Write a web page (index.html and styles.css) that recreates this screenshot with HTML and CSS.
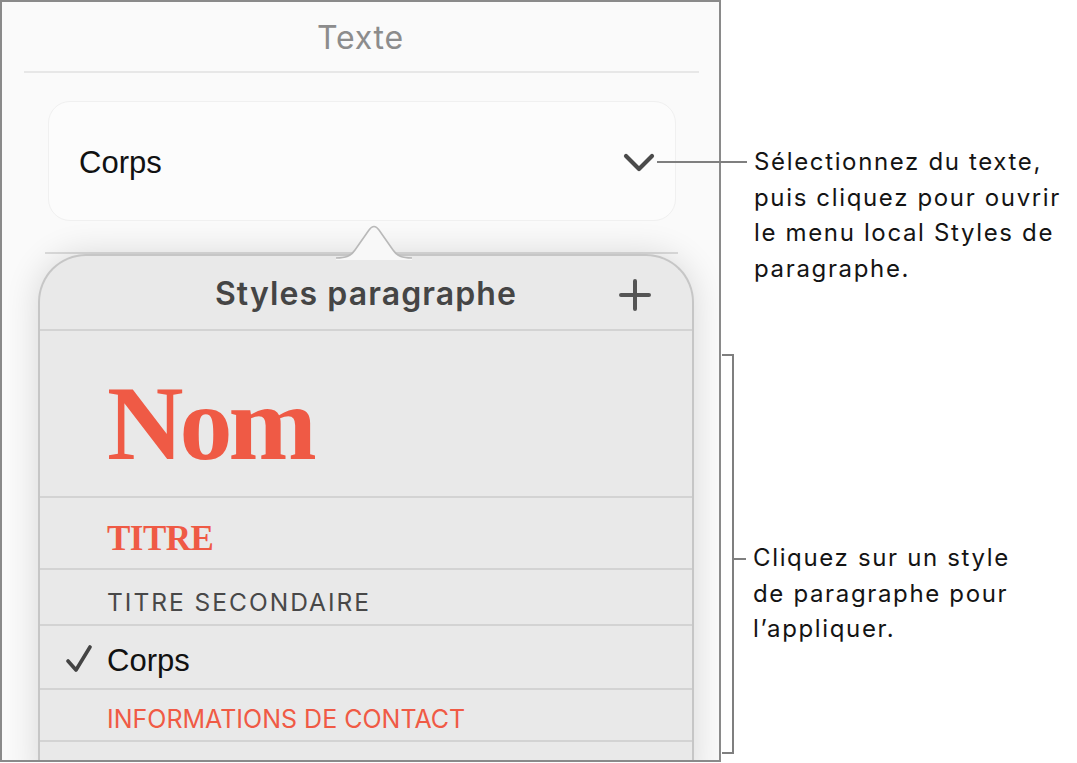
FILE: index.html
```
<!DOCTYPE html>
<html lang="fr">
<head>
<meta charset="utf-8">
<title>Styles de paragraphe</title>
<link rel="stylesheet" href="styles.css">
</head>
<body>
<div class="stage">
  <div class="panel">
    <div class="title">Texte</div>
    <div class="rule rule-top"></div>
    <div class="select">
      <span class="select-label">Corps</span>
      <svg class="chevron" width="32" height="20" viewBox="0 0 32 20"><path d="M3 3 L16 16 L29 3" fill="none" stroke="#4a4a4a" stroke-width="4.2" stroke-linecap="round" stroke-linejoin="round"/></svg>
    </div>
    <div class="rule rule-mid"></div>
    <div class="popover">
      <svg class="pointer" width="76" height="36" viewBox="0 0 76 36"><path d="M0 34 C10 34 15 32 19 26 L33 6 Q38 -1 43 6 L57 26 C61 32 66 34 76 34 L76 36 L0 36 Z" fill="#f8f8f8"/><path d="M0 34 C10 34 15 32 19 26 L33 6 Q38 -1 43 6 L57 26 C61 32 66 34 76 34" fill="none" stroke="#b9b9b9" stroke-width="1.6"/></svg>
      <div class="pop-head">
        <span></span>
        <span class="pop-title">Styles paragraphe</span>
        <svg class="plus" width="32" height="32" viewBox="0 0 32 32"><path d="M16 2 V30 M2 16 H30" stroke="#555" stroke-width="4" stroke-linecap="round"/></svg>
      </div>
      <ul class="styles">
        <li class="row row-nom"><span class="s-nom">Nom</span></li>
        <li class="row row-titre"><span class="s-titre">TITRE</span></li>
        <li class="row row-sec"><span class="s-sec">TITRE SECONDAIRE</span></li>
        <li class="row row-corps"><svg class="check" width="28" height="28" viewBox="0 0 28 28"><path d="M3 16 L11 25 L25 2" fill="none" stroke="#444" stroke-width="3.6" stroke-linecap="round" stroke-linejoin="round"/></svg><span class="s-corps">Corps</span></li>
        <li class="row row-info"><span class="s-info">INFORMATIONS DE CONTACT</span></li>
        <li class="row row-last"></li>
      </ul>
    </div>
  </div>
  <div class="notes">
    <p class="note note-1">Sélectionnez du texte,<br>puis cliquez pour ouvrir<br>le menu local Styles de<br>paragraphe.</p>
    <div class="note-2">
      <div class="bracket"></div>
      <p class="note note-text">Cliquez sur un style<br>de paragraphe pour<br>l’appliquer.</p>
    </div>
  </div>
</div>
</body>
</html>
```

FILE: styles.css
```
* { box-sizing: border-box; }
html, body { margin: 0; padding: 0; background: #ffffff; }
body { font-family: "Inter", "Liberation Sans", sans-serif; color: #111; }

.stage { display: flex; width: 1077px; height: 763px; overflow: hidden; }

.panel {
  width: 721px;
  height: 762px;
  border: 2px solid #8a8a8a;
  background: #fafafa;
  overflow: hidden;
  flex: none;
  display: flex;
  flex-direction: column;
}
.panel > * { flex: none; }

.title {
  height: 69px;
  display: flex;
  align-items: center;
  justify-content: center;
  font-size: 32px;
  letter-spacing: 0.8px;
  color: #8c8c8c;
  padding-top: 1px;
}

.rule { height: 2px; }
.rule-top { margin: 0 20px 0 22px; background: #e7e7e7; }

.select {
  margin: 28px 0 0 46px;
  width: 628px;
  height: 120px;
  border-radius: 22px;
  background: #fcfcfc;
  border: 1px solid #f0f0f0;
  display: flex;
  align-items: center;
  justify-content: space-between;
  padding: 3px 20px 0 30px;
}
.select-label {
  font-family: "Liberation Sans", "Inter", sans-serif;
  font-size: 31px;
  color: #111;
}
.chevron { display: block; margin-top: 0; }

.rule-mid { margin: 31px 0 0 43px; width: 633px; background: #dcdcdc; }

.popover {
  position: relative;
  margin-left: 36px;
  width: 656px;
  border: 2px solid #c6c6c6;
  border-bottom: none;
  border-radius: 48px 48px 0 0;
  background: #e9e9e9;
  box-shadow: 0 0 34px rgba(0, 0, 0, 0.14);
}

.pointer {
  position: absolute;
  left: 296px;
  top: -32px;
  display: block;
}

.pop-head {
  height: 75px;
  display: grid;
  grid-template-columns: 1fr auto 1fr;
  align-items: center;
  border-bottom: 2px solid #d3d3d3;
  padding-top: 2px;
}
.pop-title {
  font-size: 32px;
  font-weight: 600;
  letter-spacing: 1.1px;
  color: #454545;
}
.plus { justify-self: end; margin-right: 41px; display: block; margin-top: 2px; }

.styles { list-style: none; margin: 0; padding: 0; }
.row {
  display: flex;
  align-items: center;
  padding-left: 67px;
  border-bottom: 2px solid #d3d3d3;
}
.row-nom { height: 167px; padding-top: 20px; }
.row-titre { height: 72px; padding-top: 12px; }
.row-sec { height: 56px; padding-top: 10px; }
.row-corps { height: 64px; padding-left: 25px; gap: 14px; padding-top: 8px; }
.row-info { height: 52px; padding-top: 8px; }
.row-last { height: 40px; border-bottom: none; }

.s-nom {
  font-family: "Liberation Serif", "DejaVu Serif", serif;
  font-weight: 700;
  font-size: 106px;
  letter-spacing: -4px;
  color: #ef5a45;
  line-height: 1;
}
.s-titre {
  font-family: "Liberation Serif", "DejaVu Serif", serif;
  font-weight: 700;
  font-size: 35px;
  color: #ef5a45;
  letter-spacing: -0.5px;
}
.s-sec {
  font-size: 24.5px;
  color: #484848;
  letter-spacing: 2px;
}
.check { display: block; margin-top: -4px; }
.s-corps {
  font-family: "Liberation Sans", "Inter", sans-serif;
  font-size: 31px;
  color: #111;
}
.s-info {
  font-size: 25px;
  color: #f05a45;
}

.notes {
  flex: 1;
  display: flex;
  flex-direction: column;
}
.note {
  margin: 0;
  font-size: 24px;
  line-height: 35.5px;
  letter-spacing: 1.65px;
  color: #141414;
}
.note-1 {
  position: relative;
  margin: 144px 0 0 33px;
}
.note-1::before {
  content: "";
  position: absolute;
  left: -97px;
  top: 17px;
  width: 90px;
  height: 2px;
  background: #7f7f7f;
}

.note-2 {
  display: flex;
  margin-top: 68px;
}
.bracket {
  position: relative;
  flex: none;
  margin-left: 1px;
  width: 12px;
  height: 400px;
  border: 2px solid #7f7f7f;
  border-left: none;
}
.bracket::after {
  content: "";
  position: absolute;
  left: 10px;
  top: 202px;
  width: 14px;
  height: 2px;
  background: #7f7f7f;
}
.note-text {
  margin: 186px 0 0 19px;
}
```
